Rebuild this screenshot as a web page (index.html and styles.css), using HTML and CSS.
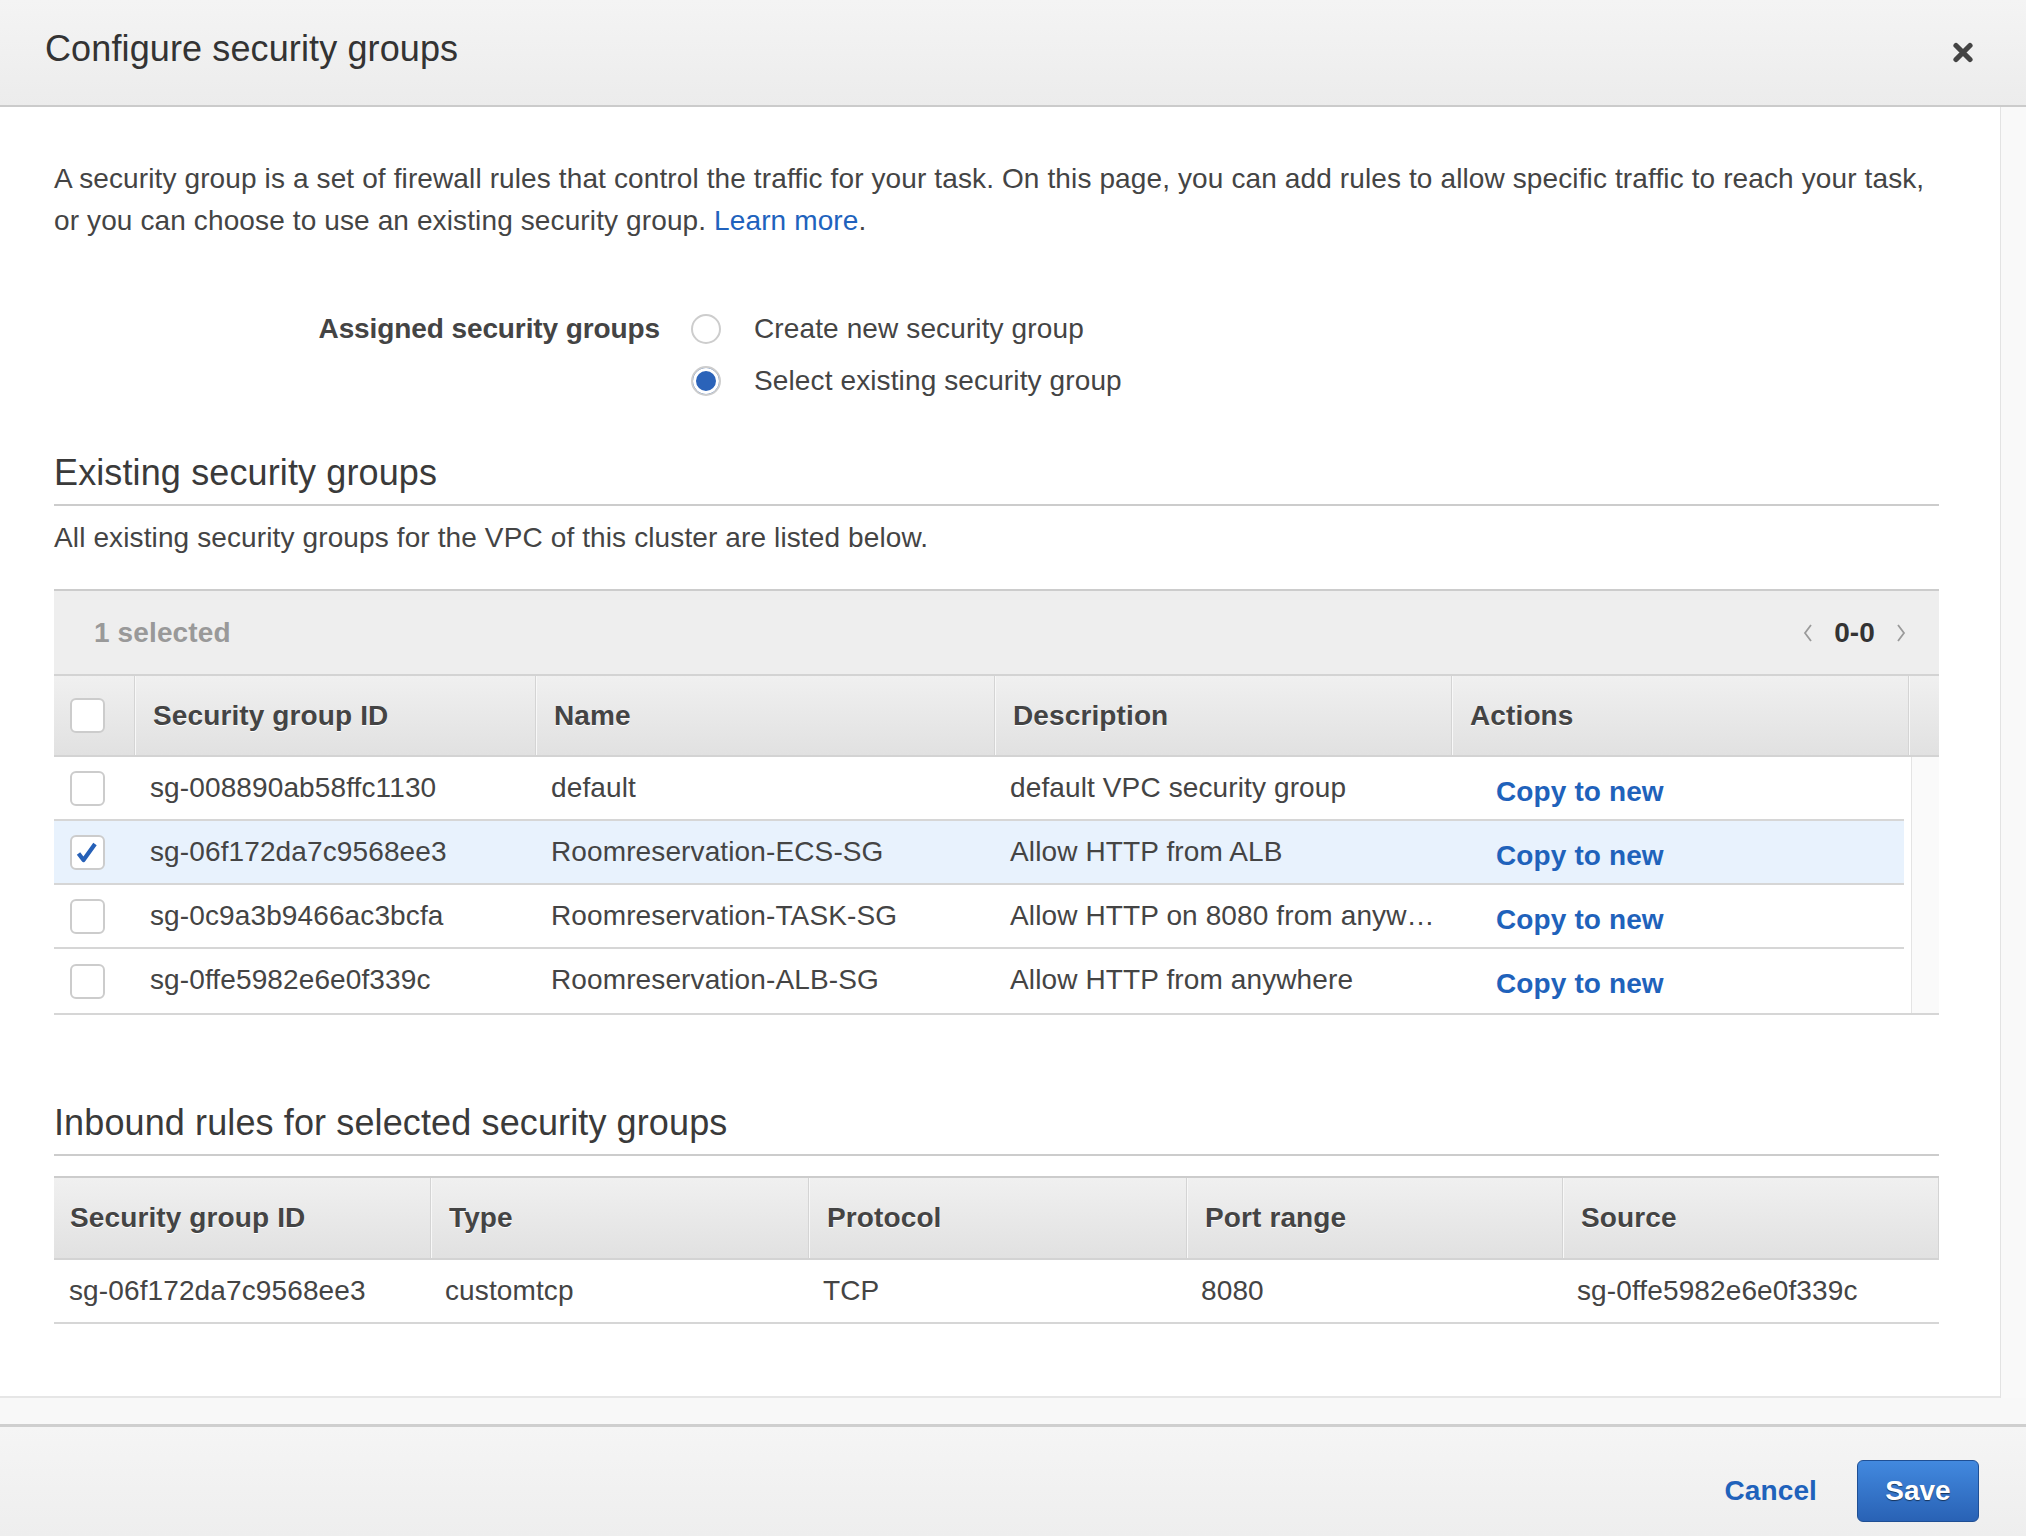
FILE: index.html
```html
<!DOCTYPE html>
<html lang="en">
<head>
<meta charset="utf-8">
<title>Configure security groups</title>
<link rel="stylesheet" href="styles.css">
</head>
<body>
<div class="modal">
  <header class="modal-header">
    <h1 class="modal-title">Configure security groups</h1>
    <button class="close-btn" aria-label="Close">
      <svg width="22" height="21" viewBox="0 0 22 21"><path d="M4 3.5 L18 17.5 M18 3.5 L4 17.5" stroke="#444" stroke-width="5.2" stroke-linecap="round" fill="none"/></svg>
    </button>
  </header>

  <div class="scroll-area">
    <div class="content">
      <p class="intro">A security group is a set of firewall rules that control the traffic for your task. On this page, you can add rules to allow specific traffic to reach your task, or you can choose to use an existing security group. <a class="link" href="#">Learn more</a>.</p>

      <div class="field">
        <div class="field-label">Assigned security groups</div>
        <div class="field-options">
          <label class="option"><span class="radio"></span><span>Create new security group</span></label>
          <label class="option"><span class="radio radio-on"></span><span>Select existing security group</span></label>
        </div>
      </div>

      <h2 class="section-title">Existing security groups</h2>
      <p class="section-desc">All existing security groups for the VPC of this cluster are listed below.</p>

      <div class="tbl">
        <div class="toolbar">
          <span class="sel-count">1 selected</span>
          <div class="pager">
            <svg width="14" height="20" viewBox="0 0 14 20"><polyline points="10,2 4,10 10,18" fill="none" stroke="#9a9a9a" stroke-width="1.8"/></svg>
            <span class="pager-range">0-0</span>
            <svg width="14" height="20" viewBox="0 0 14 20"><polyline points="4,2 10,10 4,18" fill="none" stroke="#9a9a9a" stroke-width="1.8"/></svg>
          </div>
        </div>
        <div class="thead thead-1">
          <div class="th th-check"><span class="cb"></span></div>
          <div class="th">Security group ID</div>
          <div class="th">Name</div>
          <div class="th">Description</div>
          <div class="th">Actions</div>
          <div class="th"></div>
        </div>
        <div class="tbody">
          <div class="rows">
            <div class="tr">
              <div class="td td-check"><span class="cb"></span></div>
              <div class="td">sg-008890ab58ffc1130</div>
              <div class="td">default</div>
              <div class="td">default VPC security group</div>
              <div class="td td-action"><a class="action-link" href="#">Copy to new</a></div>
            </div>
            <div class="tr tr-selected">
              <div class="td td-check"><span class="cb"><svg width="35" height="35" viewBox="0 0 35 35"><path d="M8.5 18.5 L13.5 25 L25 9" fill="none" stroke="#2660b7" stroke-width="4.2" stroke-linejoin="round"/></svg></span></div>
              <div class="td">sg-06f172da7c9568ee3</div>
              <div class="td">Roomreservation-ECS-SG</div>
              <div class="td">Allow HTTP from ALB</div>
              <div class="td td-action"><a class="action-link" href="#">Copy to new</a></div>
            </div>
            <div class="tr">
              <div class="td td-check"><span class="cb"></span></div>
              <div class="td">sg-0c9a3b9466ac3bcfa</div>
              <div class="td">Roomreservation-TASK-SG</div>
              <div class="td">Allow HTTP on 8080 from anywhere</div>
              <div class="td td-action"><a class="action-link" href="#">Copy to new</a></div>
            </div>
            <div class="tr">
              <div class="td td-check"><span class="cb"></span></div>
              <div class="td">sg-0ffe5982e6e0f339c</div>
              <div class="td">Roomreservation-ALB-SG</div>
              <div class="td">Allow HTTP from anywhere</div>
              <div class="td td-action"><a class="action-link" href="#">Copy to new</a></div>
            </div>
          </div>
          <div class="rows-track"></div>
        </div>
      </div>

      <h2 class="section-title section-title-2">Inbound rules for selected security groups</h2>

      <div class="tbl tbl-2">
        <div class="thead thead-2">
          <div class="th">Security group ID</div>
          <div class="th">Type</div>
          <div class="th">Protocol</div>
          <div class="th">Port range</div>
          <div class="th th-last">Source</div>
        </div>
        <div class="tr tr-2">
          <div class="td">sg-06f172da7c9568ee3</div>
          <div class="td">customtcp</div>
          <div class="td">TCP</div>
          <div class="td">8080</div>
          <div class="td">sg-0ffe5982e6e0f339c</div>
        </div>
      </div>
    </div>
    <div class="vtrack"></div>
  </div>
  <div class="htrack"></div>

  <footer class="modal-footer">
    <a class="cancel" href="#">Cancel</a>
    <button class="save">Save</button>
  </footer>
</div>
</body>
</html>
```

FILE: styles.css
```css
* { box-sizing: border-box; }
html, body { margin: 0; padding: 0; height: 100%; }
body {
  font-family: "Liberation Sans", Arial, Helvetica, sans-serif;
  color: #444;
  background: #fff;
  overflow: hidden;
  letter-spacing: 0.12px;
}

.modal {
  display: flex;
  flex-direction: column;
  height: 1536px;
}

/* Header */
.modal-header {
  flex: none;
  height: 107px;
  display: flex;
  justify-content: space-between;
  align-items: flex-start;
  padding: 27px 52px 0 45px;
  background: linear-gradient(#f4f4f4, #ececec);
  border-bottom: 2px solid #cbcbcb;
}
.modal-title {
  margin: 0;
  font-size: 36px;
  line-height: 44px;
  font-weight: normal;
  color: #333;
}
.close-btn {
  margin-top: 15px;
  padding: 0;
  border: 0;
  background: none;
  width: 22px;
  height: 21px;
  display: block;
}
.close-btn svg { display: block; }

/* Scroll area */
.scroll-area {
  flex: none;
  height: 1291px;
  display: flex;
}
.content {
  width: 2000px;
  flex: none;
  padding: 51px 61px 0 54px;
  border-bottom: 2px solid #e6e6e6;
  overflow: hidden;
}
.vtrack {
  flex: 1;
  background: #f9f9f9;
  border-left: 1px solid #e3e3e3;
}
.htrack {
  flex: none;
  height: 26px;
  background: #f8f8f8;
}

.intro {
  margin: 0;
  font-size: 28px;
  line-height: 42px;
}
.link { color: #2062bd; text-decoration: none; }

/* Radio field */
.field {
  display: flex;
  margin-top: 61px;
  font-size: 28px;
  line-height: 52px;
}
.field-label {
  width: 606px;
  text-align: right;
  font-weight: bold;
  letter-spacing: -0.1px;
  color: #444;
}
.field-options {
  margin-left: 31px;
  display: flex;
  flex-direction: column;
}
.option {
  display: flex;
  align-items: center;
  height: 52px;
}
.radio {
  width: 30px;
  height: 30px;
  border-radius: 50%;
  border: 2px solid #cdcdcd;
  background: #fff;
  margin-right: 33px;
  flex: none;
}
.radio-on {
  background: #2b63b9;
  box-shadow: inset 0 0 0 3px #fff;
}

/* Sections */
.section-title {
  margin: 44px 0 0;
  font-size: 36px;
  line-height: 44px;
  font-weight: normal;
  color: #3a3a3a;
  padding-bottom: 9px;
  border-bottom: 2px solid #cccccc;
}
.section-title-2 { margin-top: 86px; }
.section-desc {
  margin: 11px 0 0;
  font-size: 28px;
  line-height: 42px;
}

/* Tables */
.tbl {
  margin-top: 30px;
  border-top: 2px solid #cccccc;
  border-bottom: 2px solid #d6d6d6;
  font-size: 28px;
}
.toolbar {
  height: 85px;
  background: #eeeeee;
  border-bottom: 2px solid #d3d3d3;
  display: flex;
  align-items: center;
  justify-content: space-between;
  padding: 0 31px 0 40px;
}
.sel-count { font-weight: bold; color: #999; }
.pager { display: flex; align-items: center; gap: 19px; }
.pager svg { display: block; }
.pager-range { font-weight: bold; color: #333; }

.thead {
  display: grid;
  height: 81px;
  background: linear-gradient(#f0f0f0, #e1e1e1);
  border-bottom: 2px solid #d3d3d3;
}
.thead-1 { grid-template-columns: 80px 401px 459px 457px 457px 1fr; }
.thead-2 { grid-template-columns: 376px 378px 378px 376px 1fr; height: 82px; }
.th {
  display: flex;
  align-items: center;
  padding-left: 18px;
  font-weight: bold;
  color: #444;
  text-shadow: 0 1px 0 #fff;
  white-space: nowrap;
  border-left: 1px solid #d4d4d4;
  box-shadow: inset 1px 0 0 #f8f8f8;
}
.thead-1 .th:first-child,
.thead-2 .th:first-child { border-left: 0; box-shadow: none; }
.thead-2 .th:first-child { padding-left: 16px; }
.th-check { padding-left: 16px; }
.th-last { border-right: 1px solid #d4d4d4; }

.tbody { display: flex; }
.rows { width: 1850px; flex: none; }
.rows-track {
  margin-left: 7px;
  flex: 1;
  background: #fafafa;
  border-left: 1px solid #e4e4e4;
}
.tr {
  display: grid;
  grid-template-columns: 80px 401px 459px 457px 1fr;
  height: 64px;
  border-bottom: 2px solid #d6d6d6;
}
.rows .tr:last-child { border-bottom: 0; }
.tr-selected { background: #e8f2fd; }
.td {
  display: block;
  padding: 0 16px;
  line-height: 62px;
  white-space: nowrap;
  overflow: hidden;
  text-overflow: ellipsis;
  color: #444;
  min-width: 0;
}
.td-check {
  display: flex;
  align-items: center;
  padding-left: 16px;
}
.td-action { padding-left: 45px; }
.action-link {
  position: relative;
  top: 4px;
  color: #1f62bb;
  font-weight: bold;
  text-decoration: none;
}

.cb {
  width: 35px;
  height: 35px;
  border: 2px solid #cccccc;
  border-radius: 6px;
  background: #fff;
  display: block;
  position: relative;
  flex: none;
}
.cb svg { position: absolute; left: -2px; top: -2px; }

.tbl-2 { margin-top: 20px; }
.tr-2 {
  grid-template-columns: 376px 378px 378px 376px 1fr;
  height: 62px;
  border-bottom: 0;
}
.tr-2 .td { padding-left: 15px; }

/* Footer */
.modal-footer {
  flex: 1;
  border-top: 3px solid #cfcfcf;
  background: linear-gradient(#f5f5f5, #eeeeee);
  display: flex;
  justify-content: flex-end;
  align-items: flex-start;
  padding: 33px 47px 0 0;
}
.cancel {
  font-size: 28px;
  font-weight: bold;
  line-height: 62px;
  color: #1f62bb;
  text-decoration: none;
  margin-right: 40px;
}
.save {
  width: 122px;
  height: 62px;
  border: 1px solid #1f4f94;
  border-radius: 6px;
  background: linear-gradient(#4289df, #2962b5);
  color: #fff;
  font-family: "Liberation Sans", Arial, Helvetica, sans-serif;
  font-size: 28px;
  font-weight: bold;
  text-shadow: 0 1px 1px rgba(0, 0, 0, 0.55);
  padding: 0;
}
```
